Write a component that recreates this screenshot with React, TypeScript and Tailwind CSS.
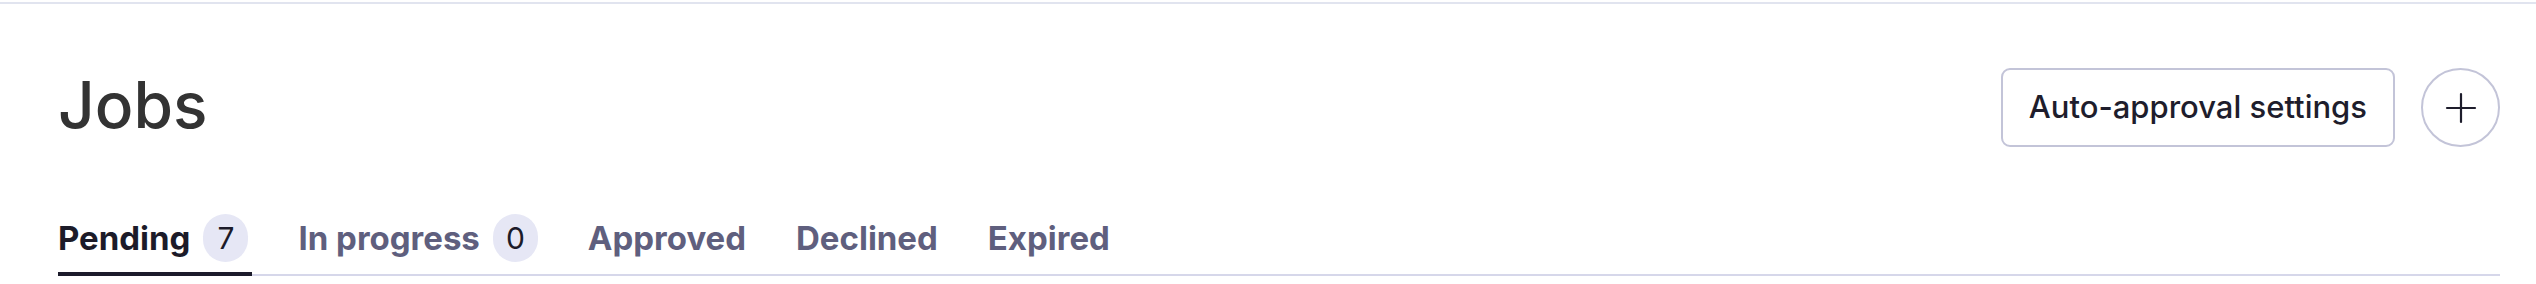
import { Plus } from 'lucide-react';

type Tab = { label: string; count?: number; active?: boolean };

const TABS: Tab[] = [
  { label: 'Pending', count: 7, active: true },
  { label: 'In progress', count: 0 },
  { label: 'Approved' },
  { label: 'Declined' },
  { label: 'Expired' },
];

export default function App() {
  return (
    <div className="min-h-screen w-full bg-white font-['Inter',_'Liberation_Sans',_sans-serif]">
      <div className="mt-[2px] h-[2px] w-full bg-[#e1e4ef]" />
      <div className="pr-[36px] pb-[8px] pl-[58px]">
        <div className="flex items-center justify-between pt-[64px]">
          <h1 className="mb-[6px] text-[64px] leading-none font-medium text-[#333333]">Jobs</h1>
          <div className="flex items-center gap-[26px]">
            <button className="flex h-[79px] items-center rounded-[9px] border-2 border-[#c3c4d8] px-[26px] text-[31px] font-medium text-[#1e1d2c]">
              Auto-approval settings
            </button>
            <button className="flex h-[79px] w-[79px] items-center justify-center rounded-full border-2 border-[#c3c4d8] text-[#1e1d2c]">
              <Plus size={48} strokeWidth={1.1} />
            </button>
          </div>
        </div>
        <div className="mt-[67px] flex items-center gap-[46px] border-b-2 border-[#d6d7ea]">
          {TABS.map((tab) => (
            <div
              key={tab.label}
              className={`-mb-[2px] flex items-center gap-[13px] border-b-4 pr-[4px] pb-[10px] ${tab.active ? 'border-[#1c1b2b] text-[#1c1b29]' : 'border-transparent text-[#5f5f7e]'}`}
            >
              <span className="flex h-[48px] items-center text-[33px] leading-none font-bold">{tab.label}</span>
              {tab.count !== undefined ? (
                <span className="flex h-[48px] w-[45px] items-center justify-center rounded-full bg-[#e6e7f5] text-[30px] leading-none font-normal text-[#1c1b29]">
                  {tab.count}
                </span>
              ) : null}
            </div>
          ))}
        </div>
      </div>
    </div>
  );
}
